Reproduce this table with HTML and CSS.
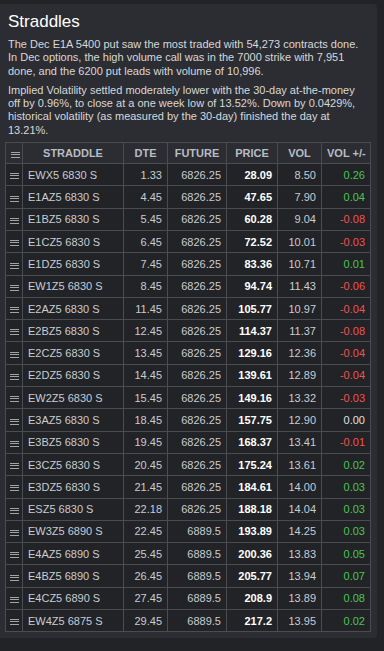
FILE: index.html
```html
<!DOCTYPE html>
<html lang="en">
<head>
  <meta charset="UTF-8">
  <meta name="viewport" content="width=device-width, initial-scale=1.0">
  <title>Straddles</title>
  <link rel="stylesheet" href="styles.css">
</head>
<body>
  <div class="panel">
    <h2>Straddles</h2>
    <p>The Dec E1A 5400 put saw the most traded with 54,273 contracts done. In Dec options, the high volume call was in the 7000 strike with 7,951 done, and the 6200 put leads with volume of 10,996.</p>
    <p>Implied Volatility settled moderately lower with the 30-day at-the-money off by 0.96%, to close at a one week low of 13.52%. Down by 0.0429%, historical volatility (as measured by the 30-day) finished the day at 13.21%.</p>

    <table class="grid">
      <colgroup>
        <col class="c-menu">
        <col class="c-name">
        <col class="c-dte">
        <col class="c-fut">
        <col class="c-price">
        <col class="c-vol">
        <col class="c-chg">
      </colgroup>
      <thead>
        <tr>
          <th><span class="burger"></span></th>
          <th>STRADDLE</th>
          <th>DTE</th>
          <th>FUTURE</th>
          <th>PRICE</th>
          <th>VOL</th>
          <th>VOL +/-</th>
        </tr>
      </thead>
      <tbody id="rows"></tbody>
    </table>
  </div>

  <script>
    const data = [
      ['EWX5 6830 S', '1.33', '6826.25', '28.09', '8.50', '0.26'],
      ['E1AZ5 6830 S', '4.45', '6826.25', '47.65', '7.90', '0.04'],
      ['E1BZ5 6830 S', '5.45', '6826.25', '60.28', '9.04', '-0.08'],
      ['E1CZ5 6830 S', '6.45', '6826.25', '72.52', '10.01', '-0.03'],
      ['E1DZ5 6830 S', '7.45', '6826.25', '83.36', '10.71', '0.01'],
      ['EW1Z5 6830 S', '8.45', '6826.25', '94.74', '11.43', '-0.06'],
      ['E2AZ5 6830 S', '11.45', '6826.25', '105.77', '10.97', '-0.04'],
      ['E2BZ5 6830 S', '12.45', '6826.25', '114.37', '11.37', '-0.08'],
      ['E2CZ5 6830 S', '13.45', '6826.25', '129.16', '12.36', '-0.04'],
      ['E2DZ5 6830 S', '14.45', '6826.25', '139.61', '12.89', '-0.04'],
      ['EW2Z5 6830 S', '15.45', '6826.25', '149.16', '13.32', '-0.03'],
      ['E3AZ5 6830 S', '18.45', '6826.25', '157.75', '12.90', '0.00'],
      ['E3BZ5 6830 S', '19.45', '6826.25', '168.37', '13.41', '-0.01'],
      ['E3CZ5 6830 S', '20.45', '6826.25', '175.24', '13.61', '0.02'],
      ['E3DZ5 6830 S', '21.45', '6826.25', '184.61', '14.00', '0.03'],
      ['ESZ5 6830 S', '22.18', '6826.25', '188.18', '14.04', '0.03'],
      ['EW3Z5 6890 S', '22.45', '6889.5', '193.89', '14.25', '0.03'],
      ['E4AZ5 6890 S', '25.45', '6889.5', '200.36', '13.83', '0.05'],
      ['E4BZ5 6890 S', '26.45', '6889.5', '205.77', '13.94', '0.07'],
      ['E4CZ5 6890 S', '27.45', '6889.5', '208.9', '13.89', '0.08'],
      ['EW4Z5 6875 S', '29.45', '6889.5', '217.2', '13.95', '0.02']
    ];

    const tbody = document.getElementById('rows');
    tbody.innerHTML = data.map(r => {
      const chg = parseFloat(r[5]);
      const cls = chg > 0 ? 'up' : chg < 0 ? 'down' : 'flat';
      return `<tr>
        <td class="menu"><span class="burger"></span></td>
        <td class="name">${r[0]}</td>
        <td class="num">${r[1]}</td>
        <td class="num">${r[2]}</td>
        <td class="num price">${r[3]}</td>
        <td class="num">${r[4]}</td>
        <td class="num ${cls}">${r[5]}</td>
      </tr>`;
    }).join('');
  </script>
</body>
</html>
```

FILE: styles.css
```css
body {
  margin: 0;
  padding: 4px 0 0;
  background-color: #212327;
  font-family: "Liberation Sans", Arial, sans-serif;
  color: #d8d8d8;
}
.panel {
  width: 367px;
  background-color: #2b2d33;
  border-radius: 0 4px 4px 0;
  padding: 5px 5px 6px;
}
h2 {
  margin: 3px 0 6px 3px;
  font-size: 17px;
  font-weight: normal;
  color: #ffffff;
}
p {
  margin: 0 8px 6px 3px;
  font-size: 11px;
  line-height: 13.3px;
}
p:last-of-type {
  margin-bottom: 0;
}
.grid {
  border-collapse: collapse;
  width: 365px;
  table-layout: fixed;
  margin-top: 5px;
  font-size: 11px;
}
.c-menu { width: 17px; }
.c-name { width: 101px; }
.c-dte { width: 44px; }
.c-fut { width: 59px; }
.c-price { width: 51px; }
.c-vol { width: 44px; }
.c-chg { width: 49px; }
th, td {
  border: 1px solid #4a4c51;
  padding: 0 5px;
  height: 21.3px;
  white-space: nowrap;
}
th {
  background-color: #2b2d33;
  color: #b8bcc4;
  font-weight: bold;
  text-align: center;
  height: 20px;
}
td {
  background-color: #212327;
  color: #c9ccd2;
}
.menu {
  padding: 0;
  text-align: center;
}
.burger {
  display: inline-block;
  width: 9px;
  height: 1px;
  border-top: 1px solid #a0a3a8;
  border-bottom: 1px solid #a0a3a8;
  position: relative;
  vertical-align: middle;
  margin-top: -2px;
}
.burger::after {
  content: "";
  position: absolute;
  left: 0;
  right: 0;
  top: 4px;
  border-top: 1px solid #a0a3a8;
}
.name {
  padding-left: 5px;
}
.num {
  text-align: right;
}
.price {
  color: #ffffff;
  font-weight: bold;
}
.up {
  color: #4cc552;
}
.down {
  color: #f0524f;
}
.flat {
  color: #e0e0e0;
}
```
